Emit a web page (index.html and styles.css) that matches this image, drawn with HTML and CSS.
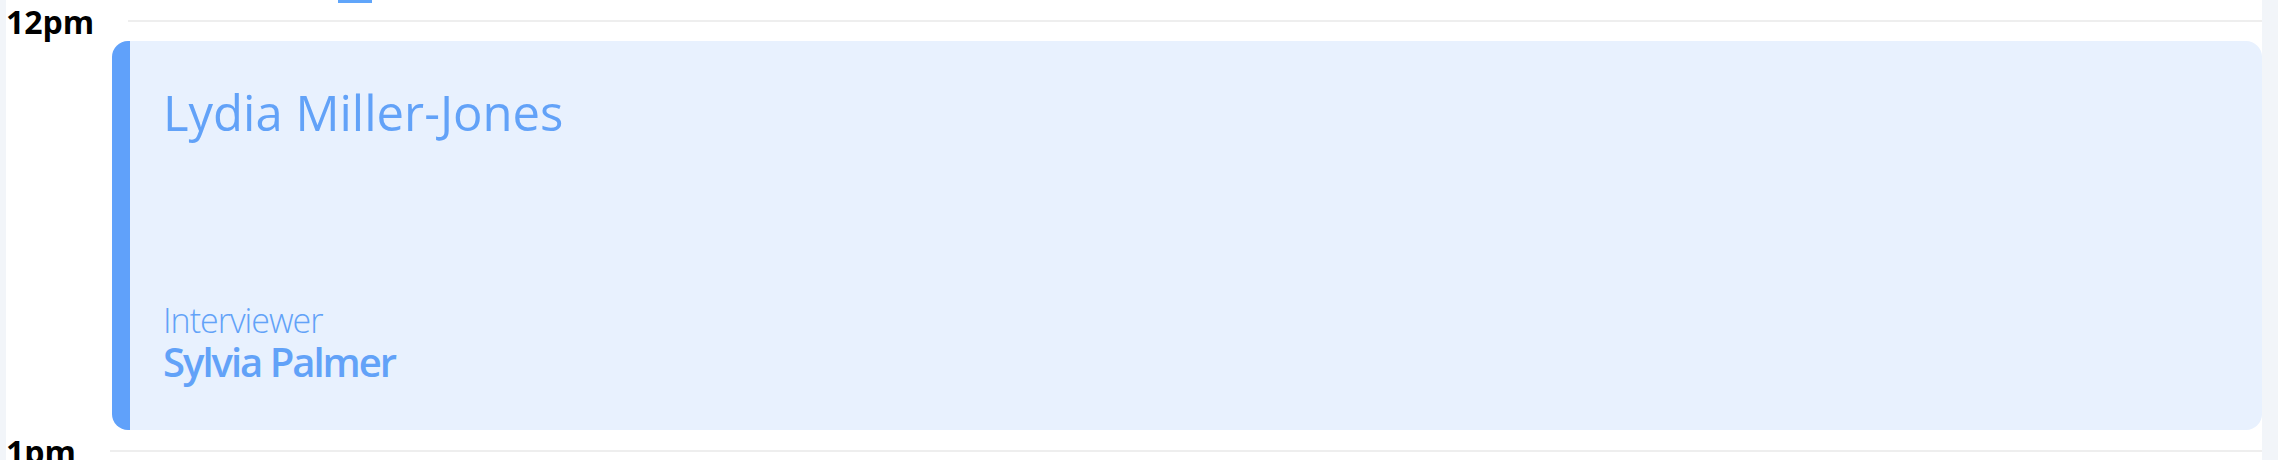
FILE: index.html
```html
<!DOCTYPE html>
<html lang="en">
<head>
<meta charset="utf-8">
<title>Schedule</title>
<link rel="stylesheet" href="styles.css">
</head>
<body>
<div class="shell">
  <main class="day">
    <div class="topbar"><span class="now-tab"></span></div>
    <section class="slot">
      <div class="hour-row">
        <span class="hour">12pm</span>
        <span class="rule"></span>
      </div>
      <article class="event">
        <h2 class="candidate">Lydia Miller-Jones</h2>
        <div class="meta">
          <span class="meta-label">Interviewer</span>
          <span class="meta-value">Sylvia Palmer</span>
        </div>
      </article>
    </section>
    <section class="slot">
      <div class="hour-row">
        <span class="hour">1pm</span>
        <span class="rule"></span>
      </div>
    </section>
  </main>
</div>
</body>
</html>
```
FILE: styles.css
```css
html, body {
  margin: 0;
  padding: 0;
  height: 100%;
  overflow: hidden;
}
body {
  background: #f2f5f9;
  font-family: "Open Sans", "Noto Sans", sans-serif;
}
.shell {
  display: flex;
  height: 100%;
  padding-left: 6px;
  padding-right: 16px;
}
.day {
  flex: 1;
  background: #ffffff;
  position: relative;
  padding-top: 2px;
  display: flex;
  flex-direction: column;
}
.topbar {
  height: 2px;
  background: #e4e4e4;
}
.now-tab {
  position: absolute;
  left: 332px;
  top: 0;
  width: 34px;
  height: 3px;
  background: #60a5fa;
}
.slot {
  display: flex;
  flex-direction: column;
}
.hour-row {
  display: flex;
  align-items: flex-start;
  gap: 34px;
  padding-top: 4px;
}
.hour {
  font-size: 32px;
  line-height: 1;
  font-weight: 700;
  color: #000;
}
.rule {
  flex: 1;
  height: 2px;
  margin-top: 14px;
  background: #eeeeee;
}
.event {
  margin: 3px 0 2px 106px;
  height: 389px;
  box-sizing: border-box;
  background: #e8f1fe;
  border-left: 18px solid #60a1fa;
  border-radius: 16px;
  padding: 42px 32px 48px 33px;
  display: flex;
  flex-direction: column;
  justify-content: space-between;
  color: #62a2f8;
}
.candidate {
  margin: 0;
  font-size: 49px;
  line-height: 1.2;
  font-weight: 400;
}
.meta {
  display: flex;
  flex-direction: column;
  gap: 5px;
}
.meta-label {
  font-size: 34px;
  line-height: 1;
  font-weight: 300;
  letter-spacing: -1px;
}
.meta-value {
  font-size: 40px;
  line-height: 1;
  font-weight: 600;
  letter-spacing: -2px;
}
```
